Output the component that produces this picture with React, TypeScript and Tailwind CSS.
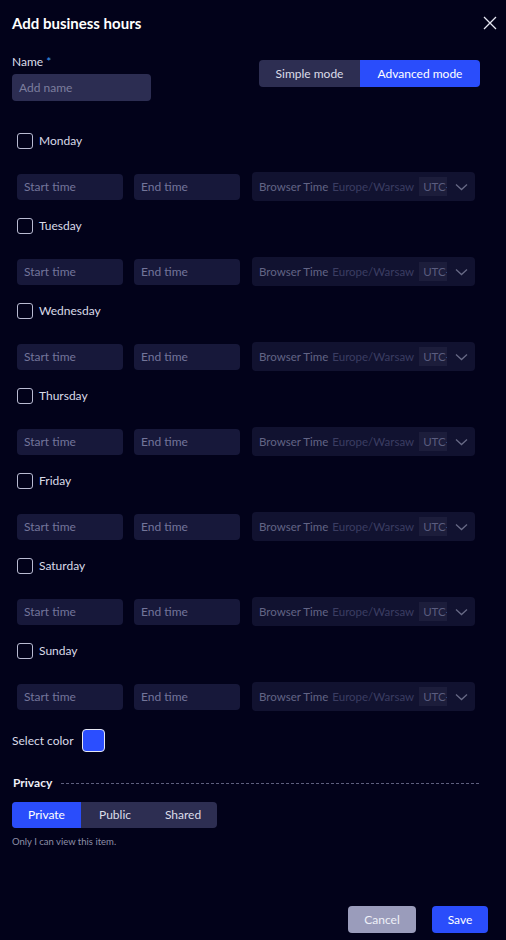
import React from "react";

const days = ["Monday", "Tuesday", "Wednesday", "Thursday", "Friday", "Saturday", "Sunday"];

function DayBlock({ day }: { day: string }) {
  return (
    <div className="flex flex-col pl-[5px]">
      <div className="flex h-[16px] items-center">
        <div className="h-[16px] w-[16px] rounded-[3px] border border-[#b9bbd2]" />
        <span className="ml-[6px] text-[12px] text-[#d9dae8]">{day}</span>
      </div>
      <div className="mt-[23px] flex h-[29px] items-center">
        <div className="flex h-[26px] w-[106px] items-center rounded-[4px] bg-[#17183a] pl-[7px] text-[12px] text-[#73759a]">
          Start time
        </div>
        <div className="ml-[11px] flex h-[26px] w-[106px] items-center rounded-[4px] bg-[#17183a] pl-[7px] text-[12px] text-[#73759a]">
          End time
        </div>
        <div className="ml-[12px] flex h-[29px] w-[223px] items-center overflow-hidden rounded-[4px] bg-[#111230] pl-[7px] text-[11.5px]">
          <span className="shrink-0 whitespace-nowrap text-[#626485]">Browser Time</span>
          <span className="ml-[4px] shrink-0 whitespace-nowrap text-[#3b3d62]">Europe/Warsaw</span>
          <div className="ml-[5px] flex h-[19px] w-[28px] shrink-0 items-center overflow-hidden whitespace-nowrap bg-[#1c1d3b] pl-[4px] text-[#5a5c7e]">
            UTC+01:00
          </div>
          <svg className="ml-[8px] shrink-0" width="13" height="8" viewBox="0 0 13 8" fill="none">
            <path d="M1 1.5 L6.5 6.5 L12 1.5" stroke="#676985" strokeWidth="1.3" />
          </svg>
        </div>
      </div>
    </div>
  );
}

export default function App() {
  return (
    <div
      className="flex h-[940px] w-full flex-col bg-[#02021a] pl-[12px] text-white"
      style={{ fontFamily: "Lato, 'Noto Sans', sans-serif" }}
    >
      <div className="mt-[13px] flex h-[20px] items-center justify-between pr-[9px]">
        <span className="text-[15px] font-bold text-white">Add business hours</span>
        <svg width="14" height="14" viewBox="0 0 14 14" fill="none">
          <path d="M1 1 L13 13 M13 1 L1 13" stroke="#e6e7f2" strokeWidth="1.3" />
        </svg>
      </div>

      <div className="mt-[21px] flex items-start justify-between pr-[26px]">
        <div className="flex flex-col">
          <div className="flex h-[16px] items-center text-[12px] text-[#dcdde9]">
            Name<span className="ml-[3px] text-[#3a9bf0]">*</span>
          </div>
          <div className="mt-[4px] flex h-[27px] w-[139px] items-center rounded-[4px] bg-[#2c2d52] pl-[7px] text-[12px] text-[#7c7e9e]">
            Add name
          </div>
        </div>
        <div className="mt-[6px] flex h-[27px] overflow-hidden rounded-[4px] text-[12px]">
          <div className="flex w-[101px] items-center justify-center bg-[#2d2e52] text-[#dcdde9]">Simple mode</div>
          <div className="flex w-[120px] items-center justify-center bg-[#2a4dfb] text-white">Advanced mode</div>
        </div>
      </div>

      <div className="mt-[32px] flex flex-col gap-[17px]">
        {days.map((d) => (
          <DayBlock key={d} day={d} />
        ))}
      </div>

      <div className="mt-[18px] flex h-[23px] items-center">
        <span className="text-[12px] text-[#d9dae8]">Select color</span>
        <div className="ml-[8px] h-[23px] w-[23px] rounded-[4px] border border-[#e6e7f2] bg-[#2b4eff]" />
      </div>

      <div className="mt-[23px] flex h-[16px] items-center pl-[1px] pr-[27px]">
        <span className="text-[12px] font-bold text-[#eeeef6]">Privacy</span>
        <div className="ml-[9px] flex-1 border-t border-dashed border-[#5d5f7e]" />
      </div>

      <div className="mt-[11px] flex h-[26px] w-[205px] overflow-hidden rounded-[4px] bg-[#2d2e52] text-[12px]">
        <div className="flex w-[69px] items-center justify-center bg-[#2a4dfb] text-white">Private</div>
        <div className="flex w-[68px] items-center justify-center text-[#dcdde9]">Public</div>
        <div className="flex w-[68px] items-center justify-center text-[#dcdde9]">Shared</div>
      </div>

      <div className="mt-[7px] h-[13px] text-[9.5px] leading-[13px] text-[#8d8fa8]">Only I can view this item.</div>

      <div className="mb-[7px] mt-auto flex justify-end gap-[16px] pr-[18px]">
        <div className="flex h-[27px] w-[68px] items-center justify-center rounded-[4px] bg-[#9a9cbb] text-[12px] text-[#eef0f8]">
          Cancel
        </div>
        <div className="flex h-[27px] w-[56px] items-center justify-center rounded-[4px] bg-[#2a4dfb] text-[12px] text-white">
          Save
        </div>
      </div>
    </div>
  );
}
